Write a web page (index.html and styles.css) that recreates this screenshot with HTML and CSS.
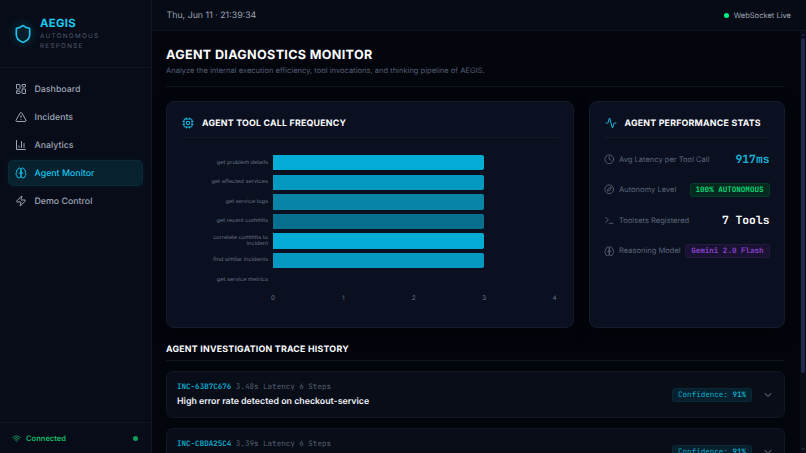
FILE: index.html
```html
<!DOCTYPE html>
<html lang="en">
<head>
<meta charset="utf-8">
<title>AEGIS</title>
<link rel="stylesheet" href="styles.css">
</head>
<body>
<svg class="defs" aria-hidden="true">
  <symbol id="brain" viewBox="0 0 24 24"><path d="M12 5a3 3 0 1 0-5.997.125 4 4 0 0 0-2.526 5.770 4 4 0 0 0 .556 6.588A4 4 0 1 0 12 18Z"/><path d="M12 5a3 3 0 1 1 5.997.125 4 4 0 0 1 2.526 5.770 4 4 0 0 1-.556 6.588A4 4 0 1 1 12 18Z"/><path d="M8.500 12h7"/></symbol>
  <symbol id="chevron" viewBox="0 0 24 24"><path d="m6 9 6 6 6-6"/></symbol>
</svg>
<div class="app">
  <aside class="sidebar">
    <div class="brand">
      <svg class="icon shield" viewBox="0 0 24 24"><path d="M20 13c0 5-3.5 7.5-7.66 8.95a1 1 0 0 1-.67-.01C7.5 20.5 4 18 4 13V6a1 1 0 0 1 1-1c2 0 4.5-1.200 6.240-2.720a1.170 1.170 0 0 1 1.520 0C14.510 3.810 17 5 19 5a1 1 0 0 1 1 1z"/></svg>
      <div>
        <div class="brand-name">AEGIS</div>
        <div class="brand-sub">AUTONOMOUS<br>RESPONSE</div>
      </div>
    </div>
    <nav class="nav">
      <a class="nav-item"><svg class="icon" viewBox="0 0 24 24"><rect x="3" y="3" width="7" height="9" rx="1"/><rect x="14" y="3" width="7" height="5" rx="1"/><rect x="14" y="12" width="7" height="9" rx="1"/><rect x="3" y="16" width="7" height="5" rx="1"/></svg><span>Dashboard</span></a>
      <a class="nav-item"><svg class="icon" viewBox="0 0 24 24"><path d="m21.730 18-8-14a2 2 0 0 0-3.480 0l-8 14A2 2 0 0 0 4 21h16a2 2 0 0 0 1.730-3Z"/><path d="M12 9v4M12 17h.01"/></svg><span>Incidents</span></a>
      <a class="nav-item"><svg class="icon" viewBox="0 0 24 24"><path d="M3 3v18h18M8 17v-3M13 17V5M18 17V9"/></svg><span>Analytics</span></a>
      <a class="nav-item active"><svg class="icon"><use href="#brain"/></svg><span>Agent Monitor</span></a>
      <a class="nav-item"><svg class="icon" viewBox="0 0 24 24"><path d="M4 14a1 1 0 0 1-.78-1.630l9.900-10.200a.5.5 0 0 1 .86.460l-1.920 6.020A1 1 0 0 0 13 10h7a1 1 0 0 1 .78 1.630l-9.900 10.200a.5.5 0 0 1-.86-.460l1.920-6.020A1 1 0 0 0 11 14z"/></svg><span>Demo Control</span></a>
    </nav>
    <div class="connection">
      <svg class="icon wifi" viewBox="0 0 24 24"><path d="M12 20h.01M2 8.820a15 15 0 0 1 20 0M5 12.859a10 10 0 0 1 14 0M8.500 16.429a5 5 0 0 1 7 0"/></svg>
      <span>Connected</span>
      <i class="dot"></i>
    </div>
  </aside>
  <div class="main">
    <header class="topbar">
      <span class="clock">Thu, Jun 11 · 21:39:34</span>
      <span class="live"><i class="dot"></i><span>WebSocket Live</span></span>
    </header>
    <div class="body">
      <main class="content">
        <div class="page-head">
          <h1><span>AGENT DIAGNOSTICS MONITOR</span></h1>
          <p><span>Analyze the internal execution efficiency, tool invocations, and thinking pipeline of AEGIS.</span></p>
        </div>
        <div class="panels">
          <section class="card">
            <h2><svg class="icon" viewBox="0 0 24 24"><rect x="4" y="4" width="16" height="16" rx="2"/><rect x="9" y="9" width="6" height="6" rx="1"/><path d="M15 2v2M15 20v2M2 15h2M2 9h2M20 15h2M20 9h2M9 2v2M9 20v2"/></svg><span>AGENT TOOL CALL FREQUENCY</span></h2>
            <div class="chart">
              <div class="row"><label>get problem details</label><div class="track"><div class="bar c1"></div></div></div>
              <div class="row"><label>get affected services</label><div class="track"><div class="bar c2"></div></div></div>
              <div class="row"><label>get service logs</label><div class="track"><div class="bar c3"></div></div></div>
              <div class="row"><label>get recent commits</label><div class="track"><div class="bar c4"></div></div></div>
              <div class="row"><label>correlate commits to<br>incident</label><div class="track"><div class="bar c1"></div></div></div>
              <div class="row"><label>find similar incidents</label><div class="track"><div class="bar c2"></div></div></div>
              <div class="row"><label>get service metrics</label><div class="track"></div></div>
              <div class="axis"><span>0</span><span>1</span><span>2</span><span>3</span><span>4</span></div>
            </div>
          </section>
          <section class="card">
            <h2><svg class="icon" viewBox="0 0 24 24"><path d="M22 12h-2.480a2 2 0 0 0-1.930 1.460l-2.350 8.360a.25.25 0 0 1-.48 0L9.240 2.180a.25.25 0 0 0-.48 0l-2.350 8.360A2 2 0 0 1 4.490 12H2"/></svg><span>AGENT PERFORMANCE STATS</span></h2>
            <div class="stats">
              <div class="stat"><svg class="icon" viewBox="0 0 24 24"><circle cx="12" cy="12" r="10"/><path d="M12 6v6l4 2"/></svg><span>Avg Latency per Tool Call</span><b class="value cyan">917ms</b></div>
              <div class="stat"><svg class="icon" viewBox="0 0 24 24"><circle cx="12" cy="12" r="10"/><path d="m16.240 7.760-1.800 5.410a2 2 0 0 1-1.270 1.270L7.760 16.240l1.800-5.410a2 2 0 0 1 1.270-1.270z"/></svg><span>Autonomy Level</span><b class="badge green">100% AUTONOMOUS</b></div>
              <div class="stat"><svg class="icon" viewBox="0 0 24 24"><path d="m4 17 6-6-6-6M12 19h8"/></svg><span>Toolsets Registered</span><b class="value">7 Tools</b></div>
              <div class="stat"><svg class="icon"><use href="#brain"/></svg><span>Reasoning Model</span><b class="badge purple">Gemini 2.0 Flash</b></div>
            </div>
          </section>
        </div>
        <h3><span>AGENT INVESTIGATION TRACE HISTORY</span></h3>
        <div class="trace">
          <div class="trace-text"><div class="meta"><b>INC-63B7C676</b> 3.48s Latency 6 Steps</div><div class="trace-title"><span>High error rate detected on checkout-service</span></div></div>
          <span class="badge conf">Confidence: <b>91%</b></span>
          <svg class="icon"><use href="#chevron"/></svg>
        </div>
        <div class="trace next">
          <div class="trace-text"><div class="meta"><b>INC-CBDA25C4</b> 3.39s Latency 6 Steps</div></div>
          <span class="badge conf">Confidence: <b>91%</b></span>
          <svg class="icon"><use href="#chevron"/></svg>
        </div>
      </main>
      <div class="scroll"><i class="up"></i><div class="thumb"></div><i class="down"></i></div>
    </div>
  </div>
</div>
</body>
</html>
```
FILE: styles.css
```css
* { box-sizing: border-box; }
body { margin: 0; background: #03050d; color: #fbfcff; font-family: Inter, sans-serif; overflow: hidden; text-rendering: geometricPrecision; }
h1, h2, h3, p { margin: 0; }
.defs { position: absolute; width: 0; height: 0; }
.icon { flex: none; width: 12px; height: 12px; fill: none; stroke: currentColor; stroke-width: 2; stroke-linecap: round; stroke-linejoin: round; }
.app { display: flex; width: 806px; height: 453px; }

.sidebar { flex: none; width: 152px; display: flex; flex-direction: column; background: #080c18; border-right: 1px solid #111624; }
.brand { height: 67.500px; display: flex; align-items: center; gap: 7.500px; padding: 1px 0 0 12.500px; border-bottom: 1px solid #111624; }
.shield { width: 20px; height: 20px; color: #1cc4ea; filter: drop-shadow(0 0 4px rgba(0, 212, 255, .5)); }
.brand-name { font-size: 11.340px; line-height: 14px; font-weight: 700; letter-spacing: .3px; color: #1cc9f2; }
.brand-sub { margin-top: 1px; font-size: 6.300px; line-height: 10px; letter-spacing: 1.290px; color: #505a6e; }
.nav { flex: 1; display: flex; flex-direction: column; gap: 1.300px; padding: 8.700px 8px 0 7.500px; }
.nav-item { display: flex; align-items: center; gap: 7.500px; height: 26.600px; padding-left: 6.500px; border: 1px solid transparent; border-radius: 5px; font-size: 8.820px; font-weight: 500; color: #9ca5b5; }
.nav-item span { padding-top: 1px; }
.nav-item.active { color: #13c4ec; background: #08212f; border-color: #0a2a39; box-shadow: 0 0 8px rgba(0, 212, 255, .06); }
.connection { height: 31px; display: flex; align-items: center; gap: 5px; padding: 0 13px 0 12px; border-top: 1px solid #111624; font-size: 7.560px; font-weight: 600; color: #10ba67; }
.wifi { width: 9px; height: 9px; }
.connection .dot { margin-left: auto; background: #0a9d5c; }
.dot { width: 5px; height: 5px; border-radius: 50%; background: #00f58a; }

.main { flex: 1; min-width: 0; display: flex; flex-direction: column; }
.topbar { flex: none; height: 31px; display: flex; align-items: center; justify-content: space-between; padding: 0 15px 0 14.500px; background: #070b15; border-bottom: 1px solid #0f1421; }
.clock { font-size: 8.820px; color: #9ca4b4; }
.live { display: flex; align-items: center; gap: 5px; font-size: 7.560px; color: #9ca4b4; }
.body { flex: 1; min-height: 0; display: flex; }
.content { flex: 1; overflow: hidden; padding: 15px 15px 0 14px; }
.scroll { width: 6px; padding: 2px 1px; display: flex; flex-direction: column; background: #080c17; }
.thumb { height: 335px; margin-top: 5px; border-radius: 2px; background: #1d2a48; }
.up, .down { width: 4px; height: 3px; background: #1d2638; clip-path: polygon(50% 0, 100% 100%, 0 100%); }
.up { margin-bottom: -3px; }
.down { margin-top: auto; transform: rotate(180deg); }

.page-head { height: 41px; border-bottom: 1px solid #0f1420; }
h1 { font-size: 12.600px; padding-top: 1px; line-height: 17px; font-weight: 700; letter-spacing: .32px; }
.page-head p { font-size: 7.560px; line-height: 12px; margin-top: 1px; color: #535e72; }
.panels { display: grid; grid-template-columns: 408px 196px; gap: 15px; margin-top: 14px; }
.card { height: 227px; padding: 15px; border: 1px solid #151b2a; border-radius: 8px; background: #0b1020; box-shadow: 0 5px 15px rgba(0, 0, 0, .4); }
.card + .card { padding: 15px 14.500px; }
.card h2 { height: 21px; display: flex; align-items: flex-start; gap: 8px; border-bottom: 1px solid #131927; font-size: 8.820px; line-height: 12px; font-weight: 700; letter-spacing: .22px; }
.card h2 span { padding-top: 1px; }
.card h2 .icon { width: 12px; height: 12px; color: #15b8dc; }
.chart { padding-top: 15px; }
.row { display: flex; align-items: center; height: 19.600px; }
.row label { width: 86px; padding-top: 1px; text-align: right; font-size: 5.670px; line-height: 5.600px; color: #667083; }
.track { width: 281.600px; height: 15.400px; margin-left: 5px; }
.bar { width: 75%; height: 100%; border-radius: 0 2px 2px 0; }
.c1 { background: #04acd5; }
.c2 { background: #0598c0; }
.c3 { background: #0784a6; }
.c4 { background: #086f8f; }
.axis { display: flex; justify-content: space-between; margin: 4px -6.600px 0 81px; font-size: 6.300px; line-height: 8px; color: #6b7486; }
.axis span { width: 20px; text-align: center; }

.stats { display: flex; flex-direction: column; gap: 12.600px; padding-top: 12px; }
.stat { display: flex; align-items: center; gap: 4.500px; height: 18px; font-size: 7.560px; color: #5a657a; white-space: nowrap; }
.stat .icon { width: 10.500px; height: 10.500px; margin-left: -.5px; }
.stat b { margin-left: auto; }
.value, .badge, .meta { font-family: "JetBrains Mono", "DejaVu Sans Mono", monospace; }
.value { font-size: 11.340px; color: #fbfcff; }
.value.cyan { color: #16b6dc; }
.badge { display: flex; align-items: center; height: 14px; padding: 0 5px; border: 1px solid; border-radius: 2.500px; font-size: 7.560px; white-space: pre; }
.green { color: #05dc7a; background: #06291f; border-color: #0a3a2e; }
.purple { color: #8b43cd; background: #1a1233; border-color: #24183f; }
.conf { color: #10a9c8; background: #06202d; border-color: #092936; }

h3 { height: 21px; margin-top: 12px; padding-top: 3px; border-bottom: 1px solid #0f1420; font-size: 8.820px; line-height: 13px; font-weight: 700; letter-spacing: .23px; }
.trace { display: flex; align-items: center; height: 47px; margin-top: 10px; padding: 0 10px; border: 1px solid #111825; border-radius: 7px; background: #080d18; }
.trace-text { flex: 1; padding-top: 1px; }
.meta { font-size: 7.560px; line-height: 11px; color: #566071; }
.meta b { color: #0ca9cc; }
.next .trace-text { align-self: flex-start; padding-top: 10px; }
.trace-title { margin-top: 2px; font-size: 8.820px; line-height: 14px; font-weight: 600; color: #eef0f6; }
.trace .icon { margin-left: 10px; color: #7c8493; }
```
